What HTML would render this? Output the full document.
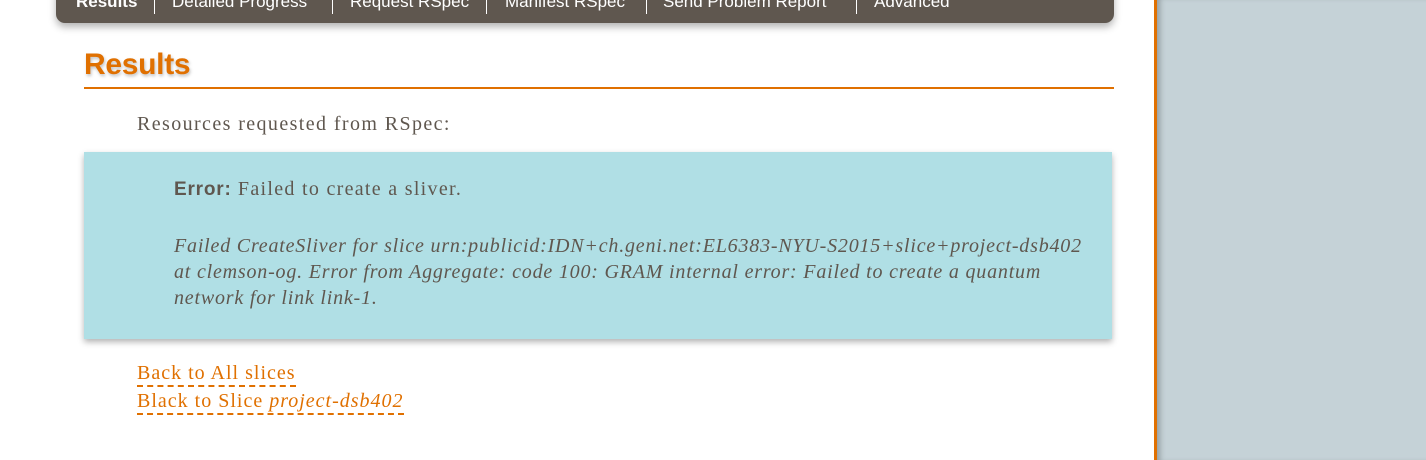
<!DOCTYPE html>
<html><head><style>
body{margin:0;width:1426px;height:460px;overflow:hidden;background:#fff;position:relative;font-family:"Liberation Serif",serif;color:#5f574f}
.side{position:absolute;left:1154px;top:0;width:272px;height:460px;background:#c5d2d7;border-left:3px solid #e07000;box-shadow:inset 6px 0 6px -3px rgba(0,0,0,.25)}
.nav{position:absolute;left:56px;top:-20px;width:1058px;height:43px;background:#5f574f;border-radius:0 0 9px 9px;box-shadow:0 4px 8px rgba(0,0,0,.3);font-family:"Liberation Sans",sans-serif;color:#fff;font-size:17px;white-space:nowrap}
.nav span{position:absolute;top:12px}
.sep{border-left:1px solid #fff;position:absolute;top:18px;height:16px}
h1{position:absolute;left:84px;top:48px;margin:0;font-family:"Liberation Sans",sans-serif;font-size:30px;color:#e07000;font-weight:bold;text-shadow:1px 2px 3px rgba(0,0,0,.25);letter-spacing:-0.3px}
.rule{position:absolute;left:84px;top:87px;width:1030px;height:2px;background:#e07000}
.p1{position:absolute;left:137px;top:113px;font-size:20px;letter-spacing:1.4px}
.box{position:absolute;left:84px;top:152px;width:1028px;height:187px;background:#b0dfe5;box-shadow:0 3px 6px rgba(0,0,0,.3)}
.err{position:absolute;left:90px;top:26px;font-size:20px;white-space:nowrap;letter-spacing:1.3px}
.err b{font-family:"Liberation Sans",sans-serif;font-size:19px;letter-spacing:0.8px}
.it{position:absolute;left:90px;top:81px;font-size:20px;font-style:italic;line-height:26px;white-space:nowrap;letter-spacing:0.8px}
a{position:absolute;left:137px;color:#e07000;text-decoration:none;font-size:20px;border-bottom:2px dashed #e07000;line-height:23px;white-space:nowrap;letter-spacing:1px}
</style></head><body>
<div class="nav">
<span style="left:20px;font-weight:bold">Results</span><i class="sep" style="left:98px"></i>
<span style="left:116px">Detailed Progress</span><i class="sep" style="left:276px"></i>
<span style="left:294px">Request RSpec</span><i class="sep" style="left:430px"></i>
<span style="left:449px">Manifest RSpec</span><i class="sep" style="left:590px"></i>
<span style="left:607px">Send Problem Report</span><i class="sep" style="left:800px"></i>
<span style="left:818px">Advanced</span>
</div>
<h1>Results</h1>
<div class="rule"></div>
<div class="p1">Resources requested from RSpec:</div>
<div class="box">
<div class="err"><b>Error:</b> Failed to create a sliver.</div>
<div class="it">Failed CreateSliver for slice urn:publicid:IDN+ch.geni.net:EL6383-NYU-S2015+slice+project-dsb402<br>at clemson-og. Error from Aggregate: code 100: GRAM internal error: Failed to create a quantum<br>network for link link-1.</div>
</div>
<a style="top:362px">Back to All slices</a>
<a style="top:390px">Black to Slice <i>project-dsb402</i></a>
<div class="side"></div>
</body></html>
